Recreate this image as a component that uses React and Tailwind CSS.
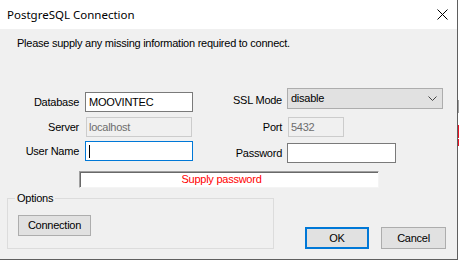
export default function App() {
  const body = { fontFamily: '"Liberation Sans", Arial, sans-serif' };
  return (
    <div className="w-[459px] h-[261px] bg-white flex overflow-hidden text-black" style={body}>
      <div className="w-[458px] h-[260px] flex flex-col border-r border-b border-[#5f5f5f]">
        {/* title bar */}
        <div className="h-[29px] bg-white flex items-center justify-between pl-[7px] pr-[9px]">
          <span className="text-[11.5px] leading-[16px]" style={{ fontFamily: '"Noto Sans", sans-serif' }}>
            PostgreSQL Connection
          </span>
          <svg width="11" height="11" viewBox="0 0 11 11" className="mt-[-1px]">
            <path d="M0.5 0.5 L10.5 10.5 M10.5 0.5 L0.5 10.5" stroke="#000" strokeWidth="1" />
          </svg>
        </div>

        {/* body */}
        <div className="flex-1 bg-[#f0f0f0] text-[11px] leading-[13px] tracking-[-0.25px]">
          <div className="pl-[17px] pt-[8px]">Please supply any missing information required to connect.</div>

          <div className="mt-[38px] flex items-start">
            {/* left column */}
            <div className="w-[220px] mt-[4px] flex flex-col">
              <div className="flex items-center h-[20px]">
                <span className="w-[79px] text-right">Database</span>
                <div className="ml-[6px] w-[108px] h-[20px] bg-white border border-[#7a7a7a] flex items-center pl-[3px]">MOOVINTEC</div>
              </div>
              <div className="flex items-center h-[20px] mt-[5px]">
                <span className="w-[79px] text-right">Server</span>
                <div className="ml-[7px] w-[106px] h-[20px] bg-[#f0f0f0] border border-[#cccccc] text-[#6d6d6d] flex items-center pl-[2px]">localhost</div>
              </div>
              <div className="flex items-center h-[20px] mt-[4px]">
                <span className="w-[79px] text-right">User Name</span>
                <div className="ml-[6px] w-[108px] h-[20px] bg-white border border-[#0078d7] flex items-center pl-[3px]">
                  <span className="w-[1px] h-[13px] bg-black" />
                </div>
              </div>
            </div>

            {/* right column */}
            <div className="flex flex-col">
              <div className="flex items-center h-[21px]">
                <span className="w-[62px] text-right mt-[4px]">SSL Mode</span>
                <div className="ml-[5px] w-[156px] h-[21px] bg-[#e1e1e1] border border-[#adadad] flex items-center justify-between pl-[3px] pr-[5px]">
                  <span>disable</span>
                  <svg width="9" height="5" viewBox="0 0 9 5">
                    <path d="M0.5 0.5 L4.5 4.5 L8.5 0.5" fill="none" stroke="#444" strokeWidth="1" />
                  </svg>
                </div>
              </div>
              <div className="flex items-center h-[20px] mt-[8px]">
                <span className="w-[62px] text-right">Port</span>
                <div className="ml-[6px] w-[56px] h-[20px] bg-[#f0f0f0] border border-[#cccccc] text-[#6d6d6d] flex items-center pl-[2px]">5432</div>
              </div>
              <div className="flex items-center h-[20px] mt-[6px]">
                <span className="w-[62px] text-right">Password</span>
                <div className="ml-[5px] w-[109px] h-[20px] bg-white border border-[#7a7a7a]" />
              </div>
            </div>
          </div>

          {/* status */}
          <div className="mt-[8px] ml-[79px] w-[300px] h-[17px] bg-white border border-t-[#a0a0a0] border-l-[#a0a0a0] border-r-[#f4f4f4] border-b-[#f4f4f4] shadow-[inset_1px_1px_0_#696969] flex items-center justify-center pr-[15px] text-[#ff0000]">
            Supply password
          </div>

          {/* bottom row */}
          <div className="mt-[4px] flex items-end pr-[11px]">
            <fieldset className="ml-[7px] w-[267px] h-[57px] border border-[#dcdcdc] pl-[7px] pt-0 m-0 min-w-0">
              <legend className="px-[2px] leading-[13px]">Options</legend>
              <button className="ml-[3px] mt-[10px] w-[73px] h-[21px] bg-[#e1e1e1] border border-[#adadad] flex items-center justify-center">
                Connection
              </button>
            </fieldset>
            <div className="ml-auto flex gap-[12px]">
              <button className="w-[64px] h-[22px] bg-[#e1e1e1] border-2 border-[#0078d7] flex items-center justify-center">OK</button>
              <button className="w-[65px] h-[22px] bg-[#e1e1e1] border border-[#adadad] flex items-center justify-center">Cancel</button>
            </div>
          </div>
        </div>
      </div>
      {/* sliver of the window behind */}
      <div className="w-[1px] flex flex-col">
        <div className="h-[100px] bg-white" />
        <div className="h-[13px] bg-[#a0a0a0]" />
        <div className="h-[12px] bg-white" />
        <div className="h-[13px] bg-[#e81123]" />
        <div className="h-[1px] bg-white" />
        <div className="h-[7px] bg-[#e81123]" />
      </div>
    </div>
  );
}
